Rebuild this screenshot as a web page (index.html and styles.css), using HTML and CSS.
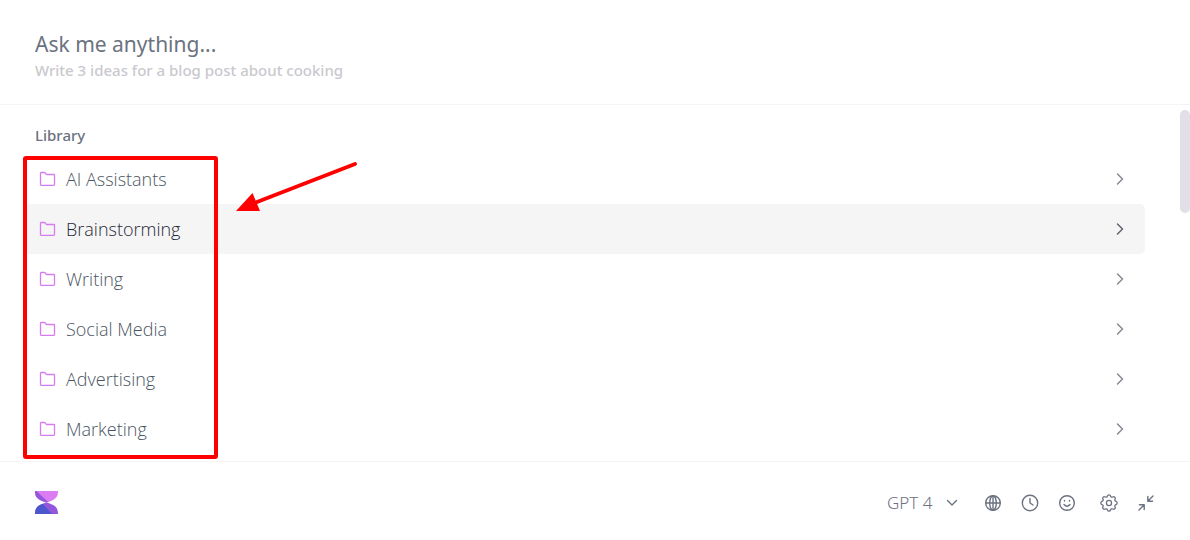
FILE: index.html
```html
<!DOCTYPE html>
<html lang="en">
<head>
<meta charset="utf-8">
<title>Ask me anything</title>
<link rel="stylesheet" href="styles.css">
</head>
<body>
<svg class="sprite" aria-hidden="true">
  <symbol id="folder" viewBox="0 0 18 18"><path d="M2.500 14.500V3.200q0-.7.7-.7h3.200q.5 0 .8.4l.9 1.200q.2.4.7.4h7q.7 0 .7.7v9.300q0 .8-.7.8H3.200q-.7 0-.7-.8z"/></symbol>
  <symbol id="chevron" viewBox="0 0 12 14"><path d="M3.500 2 8.500 7l-5 5"/></symbol>
</svg>
<div class="app">
  <header class="prompt">
    <input class="prompt-input" type="text" aria-label="Prompt" aria-describedby="hint" placeholder="Ask me anything...">
    <p class="prompt-hint" id="hint">Write 3 ideas for a blog post about cooking</p>
  </header>
  <main class="library">
    <h2 class="library-title">Library</h2>
    <nav class="list" aria-label="Library">
      <button class="item" type="button"><svg class="folder"><use href="#folder"/></svg><span class="name">AI Assistants</span><svg class="chevron"><use href="#chevron"/></svg></button>
      <button class="item active" type="button"><svg class="folder"><use href="#folder"/></svg><span class="name">Brainstorming</span><svg class="chevron"><use href="#chevron"/></svg></button>
      <button class="item" type="button"><svg class="folder"><use href="#folder"/></svg><span class="name">Writing</span><svg class="chevron"><use href="#chevron"/></svg></button>
      <button class="item" type="button"><svg class="folder"><use href="#folder"/></svg><span class="name">Social Media</span><svg class="chevron"><use href="#chevron"/></svg></button>
      <button class="item" type="button"><svg class="folder"><use href="#folder"/></svg><span class="name">Advertising</span><svg class="chevron"><use href="#chevron"/></svg></button>
      <button class="item" type="button"><svg class="folder"><use href="#folder"/></svg><span class="name">Marketing</span><svg class="chevron"><use href="#chevron"/></svg></button>
      <div class="callout"></div>
      <svg class="arrow" viewBox="0 0 124 52"><path class="shaft" d="M120 4 22 42"/><path class="head" d="M1 51 17.500 33 25 51z"/></svg>
    </nav>
    <div class="scroll-thumb"></div>
  </main>
  <footer class="footer">
    <svg class="logo" viewBox="0 0 23 23">
      <path fill="#dc7cf2" d="M0 0h23v1q0 6-6 8.500-3 1.500-5.500 2Q9 11 6 9.500 0 7 0 1z"/>
      <path fill="#9357dc" d="M0 0h1.500l11.500 11-1.500.5Q9 11 6 9.500 0 7 0 1z"/>
      <path fill="#9357dc" d="M0 23v-1q0-6 6-8.500 3-1.500 5.500-2 2.500.5 5.500 2 6 2.500 6 8.500v1z"/>
      <path fill="#4c56ce" d="M0 23v-1q0-6 6-8.500l1.500-.7L17 23z"/>
    </svg>
    <div class="model">
      <select class="model-select" aria-label="Model"><option>GPT 4</option></select>
      <svg class="model-arrow" viewBox="0 0 12 8"><path d="m1.500 1.500 4.500 4.500 4.500-4.500"/></svg>
    </div>
    <div class="tools">
      <button class="tool" type="button" aria-label="Web"><svg viewBox="0 0 20 20"><circle cx="10" cy="10" r="7.300"/><ellipse cx="10" cy="10" rx="3.300" ry="7.300"/><path d="M2.700 10h14.600M10 2.700v14.600"/></svg></button>
      <button class="tool" type="button" aria-label="History"><svg viewBox="0 0 20 20"><circle cx="10" cy="10" r="7.700"/><path d="M10 5.500V10l3 2"/></svg></button>
      <button class="tool" type="button" aria-label="Tone"><svg viewBox="0 0 20 20"><circle cx="10" cy="10" r="7.300"/><path d="M7 11.500q3 3.400 6 0M7.500 7.500v.6M12.500 7.500v.6"/></svg></button>
      <button class="tool settings" type="button" aria-label="Settings"><svg viewBox="1 1 22 22"><path d="M10.325 4.317c.426-1.756 2.924-1.756 3.350 0a1.724 1.724 0 0 0 2.573 1.066c1.543-.94 3.310.826 2.370 2.370a1.724 1.724 0 0 0 1.065 2.572c1.756.426 1.756 2.924 0 3.350a1.724 1.724 0 0 0-1.066 2.573c.94 1.543-.826 3.310-2.370 2.370a1.724 1.724 0 0 0-2.572 1.065c-.426 1.756-2.924 1.756-3.350 0a1.724 1.724 0 0 0-2.573-1.066c-1.543.94-3.310-.826-2.370-2.370a1.724 1.724 0 0 0-1.065-2.572c-1.756-.426-1.756-2.924 0-3.350a1.724 1.724 0 0 0 1.066-2.573c-.94-1.543.826-3.310 2.370-2.370.996.608 2.296.070 2.572-1.065z"/><circle cx="12" cy="12" r="2.800"/></svg></button>
      <button class="tool" type="button" aria-label="Collapse"><svg viewBox="0 0 20 20"><path d="M17 3l-5 5M11.800 3.500v4.700h4.700M3 17l5-5M3.500 11.800h4.700v4.700"/></svg></button>
    </div>
  </footer>
</div>
</body>
</html>
```
FILE: styles.css
```css
* {
  box-sizing: border-box;
}

body {
  margin: 0;
  background: #fff;
  color: #6b7280;
  font-family: "Noto Sans", "Open Sans", sans-serif;
}

button,
input,
select {
  margin: 0;
  padding: 0;
  border: 0;
  background: none;
  color: inherit;
  font: inherit;
}

svg {
  fill: none;
  stroke-linecap: round;
  stroke-linejoin: round;
}

.sprite {
  display: none;
}

.app {
  display: flex;
  flex-direction: column;
  min-height: 100vh;
}

.prompt {
  padding: 29px 35px 22px;
  border-bottom: 1px solid #f4f4f5;
}

.prompt-input {
  display: block;
  width: 100%;
  height: 30px;
  font-size: 21px;
  line-height: 30px;
  outline: none;
}

.prompt-input::placeholder {
  color: #6b7280;
  opacity: 1;
}

.prompt-hint {
  margin: 0;
  color: #c9c9ce;
  font-size: 15px;
  font-weight: 500;
  line-height: 23px;
}

.library {
  position: relative;
  flex: 1;
  padding: 19px 45px 7px 25px;
}

.library-title {
  margin: 0;
  padding: 0 10px;
  font-size: 15px;
  font-weight: 500;
  line-height: 22px;
}

.list {
  position: relative;
  padding-top: 8px;
}

.item {
  display: flex;
  align-items: center;
  gap: 10px;
  width: 100%;
  height: 50px;
  padding: 0 19px 0 13px;
  border-radius: 5px;
  color: #4b5563;
  font-family: "Open Sans", "Noto Sans", sans-serif;
  font-size: 18px;
  font-weight: 300;
  text-align: left;
}

.item.active {
  background: #f5f5f5;
  color: #1f2937;
}

.folder {
  width: 18px;
  height: 18px;
  stroke: #d67bf0;
  stroke-width: 1.3;
}

.name {
  flex: 1;
}

.chevron {
  width: 12px;
  height: 14px;
  stroke: #858994;
  stroke-width: 1.5;
}

.active .chevron {
  stroke: #5f6470;
}

.callout {
  position: absolute;
  top: 10px;
  left: -2px;
  width: 195px;
  height: 303px;
  border: 4px solid #f00;
  border-radius: 3px;
}

.arrow {
  position: absolute;
  top: 14px;
  left: 210px;
  width: 124px;
  height: 52px;
}

.shaft {
  stroke: #f00;
  stroke-width: 4;
}

.head {
  fill: #f00;
}

.scroll-thumb {
  position: absolute;
  top: 5px;
  right: 0;
  width: 10px;
  height: 103px;
  border-radius: 5px;
  background: #e2dfe7;
}

.footer {
  display: flex;
  align-items: center;
  height: 79px;
  padding: 3px 34px 0 35px;
  border-top: 1px solid #f4f4f5;
}

.logo {
  width: 23px;
  height: 23px;
  margin-right: auto;
}

.model {
  display: flex;
  align-items: center;
  gap: 13px;
  margin-right: 25px;
}

.model-select {
  appearance: none;
  font-size: 17px;
  font-weight: 300;
}

.model-arrow {
  width: 12px;
  height: 8px;
  stroke: #6b7280;
  stroke-width: 1.4;
}

.tools {
  display: flex;
  align-items: center;
  gap: 17px;
}

.tool {
  display: flex;
  width: 20px;
  height: 20px;
}

.tool svg {
  width: 100%;
  height: 100%;
  stroke: #6b7280;
  stroke-width: 1.4;
}

.settings {
  margin-left: 5px;
}
```
